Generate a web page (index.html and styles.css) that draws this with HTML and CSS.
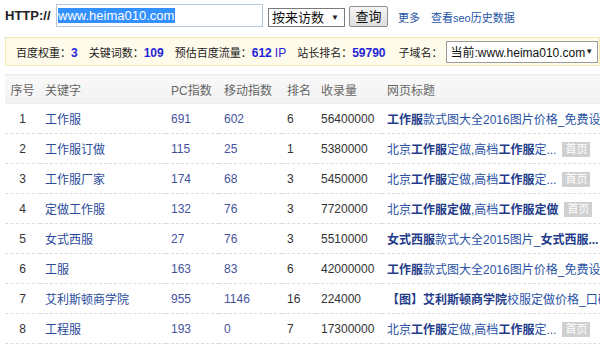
FILE: index.html
```html
<!DOCTYPE html>
<html>
<head>
<meta charset="utf-8">
<link rel="stylesheet" href="styles.css">
</head>
<body>
<div class="top">
  <span class="proto">HTTP://</span>
  <div class="urlbox"><span class="sel">www.heima010.com</span></div>
  <div class="select">按来访数<span class="arrow">▼</span></div>
  <div class="btn">查询</div>
  <a class="link more">更多</a>
  <a class="link">查看seo历史数据</a>
</div>
<div class="info">
  <span class="item">百度权重：<b>3</b></span>
  <span class="item">关键词数：<b>109</b></span>
  <span class="item">预估百度流量：<b>612</b> <i>IP</i></span>
  <span class="item">站长排名：<b>59790</b></span>
  <span class="item sub">子域名：<span class="subsel">当前:www.heima010.com<span class="arrow">▼</span></span></span>
</div>
<div class="wrap">
<table class="grid">
  <thead>
    <tr><th class="c-no">序号</th><th class="c-kw">关键字</th><th class="c-pc">PC指数</th><th class="c-mo">移动指数</th><th class="c-rk">排名</th><th class="c-in">收录量</th><th class="c-tt">网页标题</th></tr>
  </thead>
  <tbody>
    <tr><td class="c-no">1</td><td class="c-kw">工作服</td><td class="c-pc">691</td><td class="c-mo">602</td><td class="c-rk">6</td><td class="c-in">56400000</td><td class="c-tt"><b>工作服</b>款式图大全2016图片价格_免费设计...</td></tr>
    <tr><td class="c-no">2</td><td class="c-kw">工作服订做</td><td class="c-pc">115</td><td class="c-mo">25</td><td class="c-rk">1</td><td class="c-in">5380000</td><td class="c-tt">北京<b>工作服</b>定做,高档<b>工作服</b>定...<span class="badge">首页</span></td></tr>
    <tr><td class="c-no">3</td><td class="c-kw">工作服厂家</td><td class="c-pc">174</td><td class="c-mo">68</td><td class="c-rk">3</td><td class="c-in">5450000</td><td class="c-tt">北京<b>工作服</b>定做,高档<b>工作服</b>定...<span class="badge">首页</span></td></tr>
    <tr><td class="c-no">4</td><td class="c-kw">定做工作服</td><td class="c-pc">132</td><td class="c-mo">76</td><td class="c-rk">3</td><td class="c-in">7720000</td><td class="c-tt">北京<b>工作服定做</b>,高档<b>工作服定做</b><span class="badge b4">首页</span></td></tr>
    <tr><td class="c-no">5</td><td class="c-kw">女式西服</td><td class="c-pc">27</td><td class="c-mo">76</td><td class="c-rk">3</td><td class="c-in">5510000</td><td class="c-tt"><b>女式西服</b>款式大全2015图片_<b>女式西服...</b></td></tr>
    <tr><td class="c-no">6</td><td class="c-kw">工服</td><td class="c-pc">163</td><td class="c-mo">83</td><td class="c-rk">6</td><td class="c-in">42000000</td><td class="c-tt"><b>工作服</b>款式图大全2016图片价格_免费设计...</td></tr>
    <tr><td class="c-no">7</td><td class="c-kw">艾利斯顿商学院</td><td class="c-pc">955</td><td class="c-mo">1146</td><td class="c-rk">16</td><td class="c-in">224000</td><td class="c-tt"><b>【图】艾利斯顿商学院</b>校服定做价格_口碑...</td></tr>
    <tr><td class="c-no">8</td><td class="c-kw">工程服</td><td class="c-pc">193</td><td class="c-mo">0</td><td class="c-rk">7</td><td class="c-in">17300000</td><td class="c-tt">北京<b>工作服</b>定做,高档<b>工作服</b>定...<span class="badge">首页</span></td></tr>
  </tbody>
</table>
</div>
</body>
</html>
```

FILE: styles.css
```css
html, body {
  margin: 0;
  padding: 0;
  overflow: hidden;
  background: #fff;
}
body {
  width: 600px;
  height: 344px;
  font-family: "Liberation Sans", "Noto Sans CJK SC", sans-serif;
  font-size: 12px;
  color: #333;
}
.top {
  display: flex;
  align-items: center;
  height: 23px;
  padding: 4px 0 0 5px;
  white-space: nowrap;
}
.proto {
  font-weight: bold;
  font-size: 13px;
  color: #222;
  width: 51px;
}
.urlbox {
  box-sizing: border-box;
  width: 207px;
  height: 23px;
  border: 1px solid #b9c8d8;
  padding: 3px 0 0 1px;
  font-size: 13px;
  line-height: 15px;
  color: #fff;
}
.sel {
  background: #3390ff;
  display: inline-block;
  padding: 0 1px 0 0;
}
.select {
  box-sizing: border-box;
  margin: 3px 0 0 5px;
  height: 19px;
  width: 77px;
  border: 1px solid #7a7a7a;
  font-size: 13px;
  line-height: 17px;
  padding-left: 3px;
  color: #111;
  display: flex;
  align-items: center;
}
.arrow {
  font-size: 8px;
  margin-left: auto;
  margin-right: 5px;
  color: #222;
}
.btn {
  box-sizing: border-box;
  margin: 2px 0 0 4px;
  width: 39px;
  height: 21px;
  border: 1px solid #8e8e8e;
  border-radius: 2px;
  background: linear-gradient(#f6f6f6, #dedede);
  font-size: 13px;
  line-height: 19px;
  text-align: center;
  color: #111;
}
.link {
  color: #2553a8;
  font-size: 11px;
  margin-top: 3px;
  margin-left: 11px;
}
.more {
  margin-left: 10px;
}
.info {
  box-sizing: border-box;
  margin: 10px 0 0 5px;
  width: 595px;
  height: 29px;
  background: #fffbea;
  border: 1px solid #f3e6b7;
  display: flex;
  align-items: center;
  padding-left: 10px;
  white-space: nowrap;
  color: #222;
  font-size: 11px;
}
.item {
  margin-right: 11px;
}
.item b {
  color: #2424d8;
  font-weight: bold;
  font-size: 12px;
}
.item i {
  font-style: normal;
  color: #2424d8;
  font-size: 12px;
}
.sub {
  display: flex;
  align-items: center;
  margin-left: 2px;
  margin-right: 0;
}
.subsel {
  box-sizing: border-box;
  display: flex;
  align-items: center;
  width: 152px;
  height: 22px;
  border: 1px solid #9a9a9a;
  background: #fff;
  padding-left: 4px;
  margin-left: 3px;
  font-size: 12px;
  color: #111;
}
.wrap {
  margin: 8px 0 0 5px;
  width: 595px;
  overflow: hidden;
}
.grid {
  border-collapse: collapse;
  width: 677px;
  table-layout: fixed;
  white-space: nowrap;
}
.grid th {
  background: linear-gradient(#f9f9f9, #f1f1f1);
  border-top: 1px solid #ececec;
  height: 28px;
  font-weight: normal;
  color: #666;
  text-align: left;
  padding: 0 0 0 5px;
}
.grid td {
  height: 29px;
  border-bottom: 1px dashed #dcdcdc;
  padding: 0 0 0 5px;
  overflow: hidden;
}
.grid tbody tr:first-child td {
  border-top: 1px solid #ececec;
}
.grid .c-no { width: 35px; text-align: center; padding-left: 0; color: #333; }
.grid th.c-no { color: #666; }
.c-kw { width: 121px; }
td.c-kw { color: #2a4b9b; }
.c-pc { width: 48px; }
td.c-pc { color: #45539e; }
.c-mo { width: 58px; }
td.c-mo { color: #45539e; }
.c-rk { width: 29px; }
td.c-rk { color: #333; }
.c-in { width: 61px; }
td.c-in { color: #333; }
.c-tt { width: 295px; }
td.c-tt { color: #2a52a5; }
td.c-tt b { color: #1f3c8a; }
.badge {
  display: inline-block;
  background: #d0d0d0;
  color: #fff;
  font-size: 11px;
  line-height: 15px;
  padding: 0 3px;
  margin-left: 6px;
  vertical-align: 1px;
}
```
